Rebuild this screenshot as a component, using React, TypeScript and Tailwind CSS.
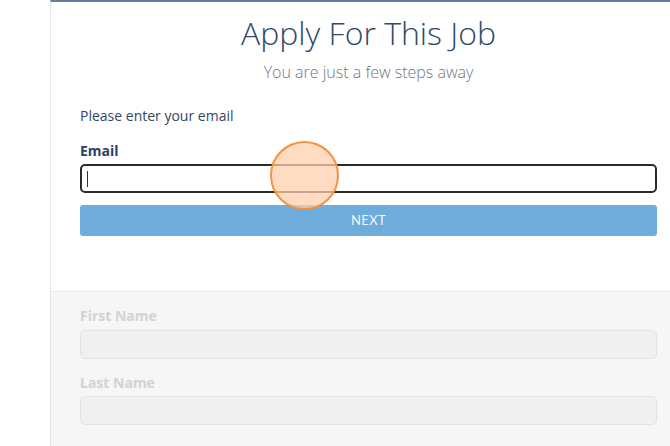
import React from "react"

export default function App() {
  return (
    <div className="h-[446px] w-[670px] overflow-hidden bg-white font-['Open_Sans',sans-serif]">
      <div className="ml-[50px] flex h-full w-[636px] flex-col border-l border-[#e3e5ea] border-t-2 border-t-[#6b7a9c]">
        {/* Email step */}
        <div className="relative h-[289px] px-[29px]">
          <h1 className="mt-[11px] text-center text-[32px] font-light leading-[40px] text-[#2d4a6b]">Apply For This Job</h1>
          <p className="mt-[9px] text-center text-[16px] font-light leading-[20px] text-[#6f7785]">
            You are just a few steps away
          </p>
          <p className="mt-[24px] text-[14px] leading-[20px] text-[#34475e]">Please enter your email</p>
          <label className="mt-[15px] block text-[14px] font-bold leading-[20px] text-[#2a4163]">Email</label>
          <div className="mt-[3px] flex h-[29px] w-[577px] items-center rounded-[5px] border-2 border-[#2b2b2b] bg-white px-[5px]">
            <span className="h-[16px] w-px bg-[#333]" />
          </div>
          <button className="mt-[12px] h-[31px] w-[577px] rounded-[3px] bg-[#6eacdc] font-['Lato',sans-serif] text-[13px] tracking-wide text-[#eef5fb]">
            NEXT
          </button>
          {/* click marker */}
          <div className="absolute left-[219px] top-[139px] h-[69px] w-[69px] rounded-full border-2 border-[#f7923a] bg-[#fdcfac]/75" />
        </div>

        {/* Disabled details step */}
        <div className="flex-1 border-t border-[#e6e7eb] bg-[#f6f6f6] px-[29px] pt-[14px]">
          <label className="block text-[14px] font-bold leading-[20px] text-[#d2d2d4]">First Name</label>
          <div className="mt-[4px] h-[29px] w-[577px] rounded-[5px] border border-[#e1e2e7] bg-[#f0f0f1]" />
          <label className="mt-[14px] block text-[14px] font-bold leading-[20px] text-[#d2d2d4]">Last Name</label>
          <div className="mt-[3px] h-[29px] w-[577px] rounded-[5px] border border-[#e1e2e7] bg-[#f0f0f1]" />
        </div>
      </div>
    </div>
  )
}
